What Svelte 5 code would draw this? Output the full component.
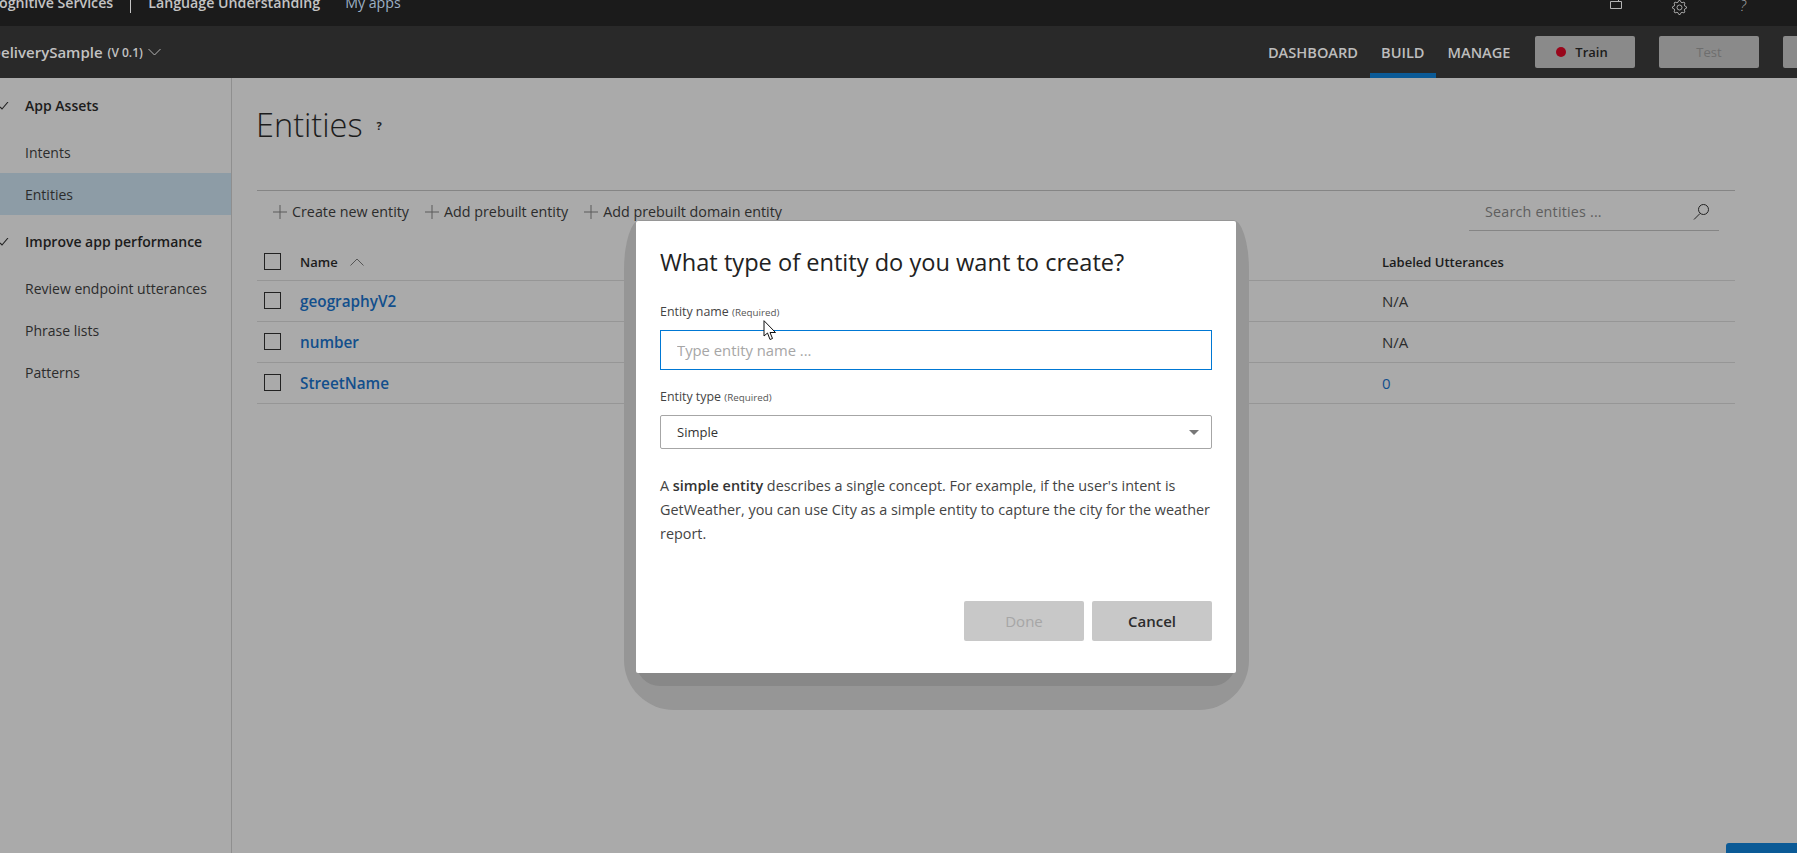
<script>
	const nav = ["DASHBOARD", "BUILD", "MANAGE"];
	const entities = [
		{ name: "geographyV2", count: "N/A" },
		{ name: "number", count: "N/A" },
		{ name: "StreetName", count: "0", link: true }
	];
	const actions = ["Create new entity", "Add prebuilt entity", "Add prebuilt domain entity"];

	// outline of the settings cog, 8 teeth
	const cog = () => {
		let d = "";
		for (let i = 0; i < 32; i++) {
			const r = i % 4 < 2 ? 7 : 5.4;
			const a = ((i - 0.5) * Math.PI) / 16;
			d += (i ? "L" : "M") + (7.5 + r * Math.cos(a)).toFixed(2) + " " + (7.5 + r * Math.sin(a)).toFixed(2);
		}
		return d + "Z";
	};
</script>

<div class="app">
	<header class="topbar">
		<span class="brand">Cognitive Services</span>
		<span class="sep"></span>
		<span class="product">Language Understanding</span>
		<span class="myapps">My apps</span>
		<div class="top-icons">
			<svg class="box-icon" width="14" height="12" viewBox="0 0 14 12" fill="none" stroke="#b4b4b4" stroke-width="1"><path d="M1.500 3.500h11v7h-11zM9.500 3.500v-4"/></svg>
			<svg class="gear" width="15" height="15" viewBox="0 0 15 15" fill="none" stroke="#a8a8a8"><path d={cog()}/><circle cx="7.500" cy="7.500" r="2.500"/></svg>
			<span class="q">?</span>
		</div>
	</header>

	<div class="appbar">
		<span class="appname">DeliverySample</span>
		<span class="ver">(V 0.1)</span>
		<svg class="chev" width="13" height="8" viewBox="0 0 13 8" fill="none" stroke="#b4b4b4"><path d="M.5 1l6 6 6-6"/></svg>
		<nav>
			{#each nav as n}
				<a class:active={n === "BUILD"} href="#top">{n}</a>
			{/each}
		</nav>
		<button class="bar-btn train"><i></i>Train</button>
		<button class="bar-btn test">Test</button>
		<button class="bar-btn last"></button>
	</div>

	<div class="content">
		<aside>
			<div class="group">
				<svg width="9" height="8" viewBox="0 0 9 8" fill="none" stroke="#222" stroke-width="1.100"><path d="M0 5l2 2 6-7"/></svg>
				App Assets
			</div>
			<div class="item">Intents</div>
			<div class="item selected">Entities</div>
			<div class="group second">
				<svg width="9" height="8" viewBox="0 0 9 8" fill="none" stroke="#222" stroke-width="1.100"><path d="M0 5l2 2 6-7"/></svg>
				Improve app performance
			</div>
			<div class="item">Review endpoint utterances</div>
			<div class="item">Phrase lists</div>
			<div class="item">Patterns</div>
		</aside>

		<main>
			<div class="heading">
				<h1>Entities</h1>
				<span class="help">?</span>
			</div>
			<div class="toolbar">
				{#each actions as a}
					<span class="action">
						<svg width="14" height="14" viewBox="0 0 14 14" stroke="#5a5a5a"><path d="M0 7h14M7 0v14"/></svg>
						{a}
					</span>
				{/each}
				<div class="search">
					<span>Search entities ...</span>
					<svg width="17" height="17" viewBox="0 0 17 17" fill="none" stroke="#222"><circle cx="10.500" cy="6.500" r="5"/><path d="M7 10.500L1 16.500"/></svg>
				</div>
			</div>
			<div class="row head">
				<span class="box"></span>
				<span class="name-head">Name
					<svg width="14" height="8" viewBox="0 0 14 8" fill="none" stroke="#555"><path d="M.5 7.500l6.500-6.500 6.500 6.500"/></svg>
				</span>
				<span>Labeled Utterances</span>
			</div>
			{#each entities as e}
				<div class="row">
					<span class="box"></span>
					<a class="entity" href="#top">{e.name}</a>
					<span class:link={e.link}>{e.count}</span>
				</div>
			{/each}
		</main>
	</div>

	<div class="modal">
		<div class="under"></div>
		<div class="dialog">
			<h2>What type of entity do you want to create?</h2>
			<div class="label">Entity name <small>(Required)</small></div>
			<input placeholder="Type entity name ..." />
			<div class="label type">Entity type <small>(Required)</small></div>
			<div class="select">Simple<i></i></div>
			<p>A <b>simple entity</b> describes a single concept. For example, if the user's intent is GetWeather, you can use City as a simple entity to capture the city for the weather report.</p>
			<div class="buttons">
				<button class="done">Done</button>
				<button>Cancel</button>
			</div>
		</div>
	</div>

	<svg class="cursor" width="14" height="21" viewBox="0 0 14 21"><path d="M1 .7V16l3.500-3 2.500 6.500 2.500-1-2.500-6h5.500z" fill="#fff" stroke="#111"/></svg>
	<div class="corner-tab"></div>
</div>

<style>
	:global(body) {
		margin: 0;
		overflow: hidden;
		background: #aaaaaa;
		font-family: "Open Sans", "Noto Sans", sans-serif;
		font-size: 13px;
		color: #222;
	}
	.app {
		position: relative;
		width: 1797px;
		height: 853px;
		overflow: hidden;
		background: #aaaaaa;
	}
	.topbar {
		height: 26px;
		background: #1b1b1b;
		color: #c4c4c4;
		display: flex;
		align-items: flex-end;
		overflow: hidden;
		font-size: 14.200px;
		font-weight: 600;
		line-height: 20px;
	}
	.topbar > * {
		margin-bottom: 13px;
	}
	.brand {
		margin-left: -10px;
	}
	.sep {
		width: 1px;
		height: 20px;
		background: #c4c4c4;
		margin: 0 17px 13px 17px;
	}
	.myapps {
		margin-left: 25px;
		font-weight: 400;
		color: #9db0c4;
	}
	.top-icons {
		margin-left: auto;
		display: flex;
		align-items: flex-end;
		padding-right: 51px;
		height: 20px;
	}
	.box-icon {
		margin-bottom: 3px;
	}
	.gear {
		margin-left: 49px;
		margin-bottom: -2px;
	}
	.q {
		margin-left: 53px;
		margin-bottom: -3px;
		font-style: italic;
		font-weight: 300;
		color: #aaa;
		font-size: 14px;
	}
	.appbar {
		height: 52px;
		background: #292929;
		display: flex;
		align-items: center;
		color: #c2c2c2;
		font-size: 15px;
		font-weight: 600;
	}
	.appname {
		margin-left: -10px;
	}
	.ver {
		font-size: 12px;
		margin-left: 5px;
	}
	.chev {
		margin-left: 5px;
	}
	nav {
		margin-left: auto;
		display: flex;
		height: 100%;
	}
	nav a {
		color: #bdbdbd;
		text-decoration: none;
		padding: 0 11.500px;
		display: flex;
		align-items: center;
		font-size: 14.600px;
		border-bottom: 5px solid transparent;
		border-top: 5px solid transparent;
	}
	nav a.active {
		border-bottom-color: #0b5a96;
	}
	.bar-btn {
		width: 100px;
		height: 32px;
		margin-left: 24px;
		border: 0;
		border-radius: 2px;
		background: #8a8a8a;
		color: #1c1c1c;
		font: inherit;
		font-size: 13px;
		display: flex;
		align-items: center;
		justify-content: center;
		gap: 9px;
		flex-shrink: 0;
	}
	.train i {
		width: 10px;
		height: 10px;
		border-radius: 50%;
		background: #99061b;
	}
	.test {
		color: #6e6e6e;
		font-weight: 400;
	}
	.train {
		margin-left: 13px;
		padding-right: 12px;
	}
	.last {
		margin-right: -86px;
	}
	.content {
		display: flex;
		height: 775px;
	}
	aside {
		width: 231px;
		border-right: 1px solid #8f8f8f;
		padding-top: 7px;
		flex-shrink: 0;
		font-size: 14px;
	}
	.group {
		height: 42px;
		box-sizing: border-box;
		padding-bottom: 2px;
		display: flex;
		align-items: center;
		padding-left: 25px;
		position: relative;
		font-weight: 600;
		color: #1c1c1c;
		margin-bottom: 4px;
	}
	.group.second {
		margin-top: 6px;
	}
	.group svg {
		position: absolute;
		left: 0;
		top: 17px;
	}
	.item {
		height: 42px;
		display: flex;
		align-items: center;
		padding-left: 25px;
		color: #2c2c2c;
	}
	.item.selected {
		background: #8d9ca6;
	}
	main {
		flex: 1;
		padding: 24px 62px 0 25px;
	}
	.heading {
		height: 88px;
		border-bottom: 1px solid #858585;
		display: flex;
		align-items: flex-start;
		gap: 14px;
	}
	h1 {
		margin: 1px 0 0 -1px;
		font-size: 32.500px;
		font-weight: 300;
		line-height: 44px;
		color: #1c1c1c;
	}
	.help {
		font-size: 11px;
		font-weight: 700;
		margin-top: 16px;
	}
	.toolbar {
		height: 41px;
		display: flex;
		align-items: center;
		padding: 0 16px;
		gap: 16px;
		color: #2c2c2c;
		font-size: 14.300px;
	}
	.action {
		display: flex;
		align-items: center;
		gap: 5px;
	}
	.search {
		margin-left: auto;
		width: 250px;
		height: 39px;
		box-sizing: border-box;
		border-bottom: 1px solid #858585;
		display: flex;
		align-items: center;
		justify-content: space-between;
		padding: 0 9px 0 16px;
		color: #5e5e5e;
		letter-spacing: 0.2px;
	}
	.row {
		height: 40px;
		border-bottom: 1px solid #969696;
		display: grid;
		grid-template-columns: 43px 1fr 353px;
		align-items: center;
		font-size: 15px;
		color: #2c2c2c;
	}
	.row.head {
		height: 36px;
		padding-top: 12px;
		font-size: 13px;
		font-weight: 600;
		color: #1c1c1c;
	}
	.name-head {
		display: flex;
		align-items: center;
		gap: 12px;
	}
	.box {
		width: 15px;
		height: 15px;
		border: 1px solid #222;
		margin-left: 7px;
		margin-top: -2px;
	}
	.entity {
		color: #124f8c;
		font-weight: 600;
		font-size: 15.300px;
		text-decoration: none;
		margin-top: -1px;
	}
	.link {
		color: #124f8c;
	}
	.modal {
		position: absolute;
		left: 624px;
		top: 220px;
		width: 625px;
		height: 490px;
		box-sizing: border-box;
		background: #969696;
		border-radius: 16px 16px 50px 50px / 50px;
		padding: 1px 13px 0 12px;
	}
	.under {
		position: absolute;
		left: 12px;
		right: 13px;
		top: 400px;
		height: 66px;
		background: #888;
		border-radius: 24px;
	}
	.dialog {
		position: relative;
		height: 452px;
		box-sizing: border-box;
		background: #fff;
		border-radius: 2px;
		padding: 24px 24px 0;
		color: #333;
	}
	h2 {
		margin: 0;
		font-size: 23.600px;
		font-weight: 400;
		line-height: 34px;
		color: #222;
	}
	.label {
		margin-top: 25px;
		font-size: 12.400px;
		line-height: 16px;
		color: #444;
	}
	.label small {
		font-size: 9.800px;
		color: #555;
	}
	.label.type {
		margin-top: 19px;
	}
	input {
		display: block;
		width: 100%;
		box-sizing: border-box;
		height: 40px;
		margin-top: 9px;
		border: 1.500px solid #0078d4;
		outline: 0;
		padding: 0 16px;
		font: inherit;
		font-size: 14.800px;
	}
	input::placeholder {
		color: #a6a6a6;
		opacity: 1;
	}
	.select {
		height: 34px;
		margin-top: 9px;
		box-sizing: border-box;
		border: 1px solid #a6a6a6;
		border-radius: 2px;
		display: flex;
		align-items: center;
		justify-content: space-between;
		padding: 0 12px 0 16px;
		font-size: 13px;
		color: #333;
	}
	.select i {
		border-left: 5px solid transparent;
		border-right: 5px solid transparent;
		border-top: 5px solid #777;
	}
	p {
		margin: 25px 0 0;
		font-size: 14.400px;
		line-height: 24px;
		color: #444;
	}
	p b {
		font-weight: 600;
		color: #333;
	}
	.buttons {
		display: flex;
		justify-content: flex-end;
		gap: 8px;
		margin-top: 55px;
	}
	.buttons button {
		width: 120px;
		height: 40px;
		border: 0;
		border-radius: 2px;
		background: #c8c8c8;
		font: inherit;
		font-size: 15px;
		font-weight: 600;
		color: #2c2c2c;
	}
	.buttons .done {
		color: #a6a6a6;
		font-weight: 400;
	}
	.cursor {
		position: absolute;
		left: 763px;
		top: 320px;
	}
	.corner-tab {
		position: absolute;
		left: 1726px;
		top: 843px;
		width: 71px;
		height: 10px;
		background: #0b5a96;
		border-top-left-radius: 3px;
	}
</style>
